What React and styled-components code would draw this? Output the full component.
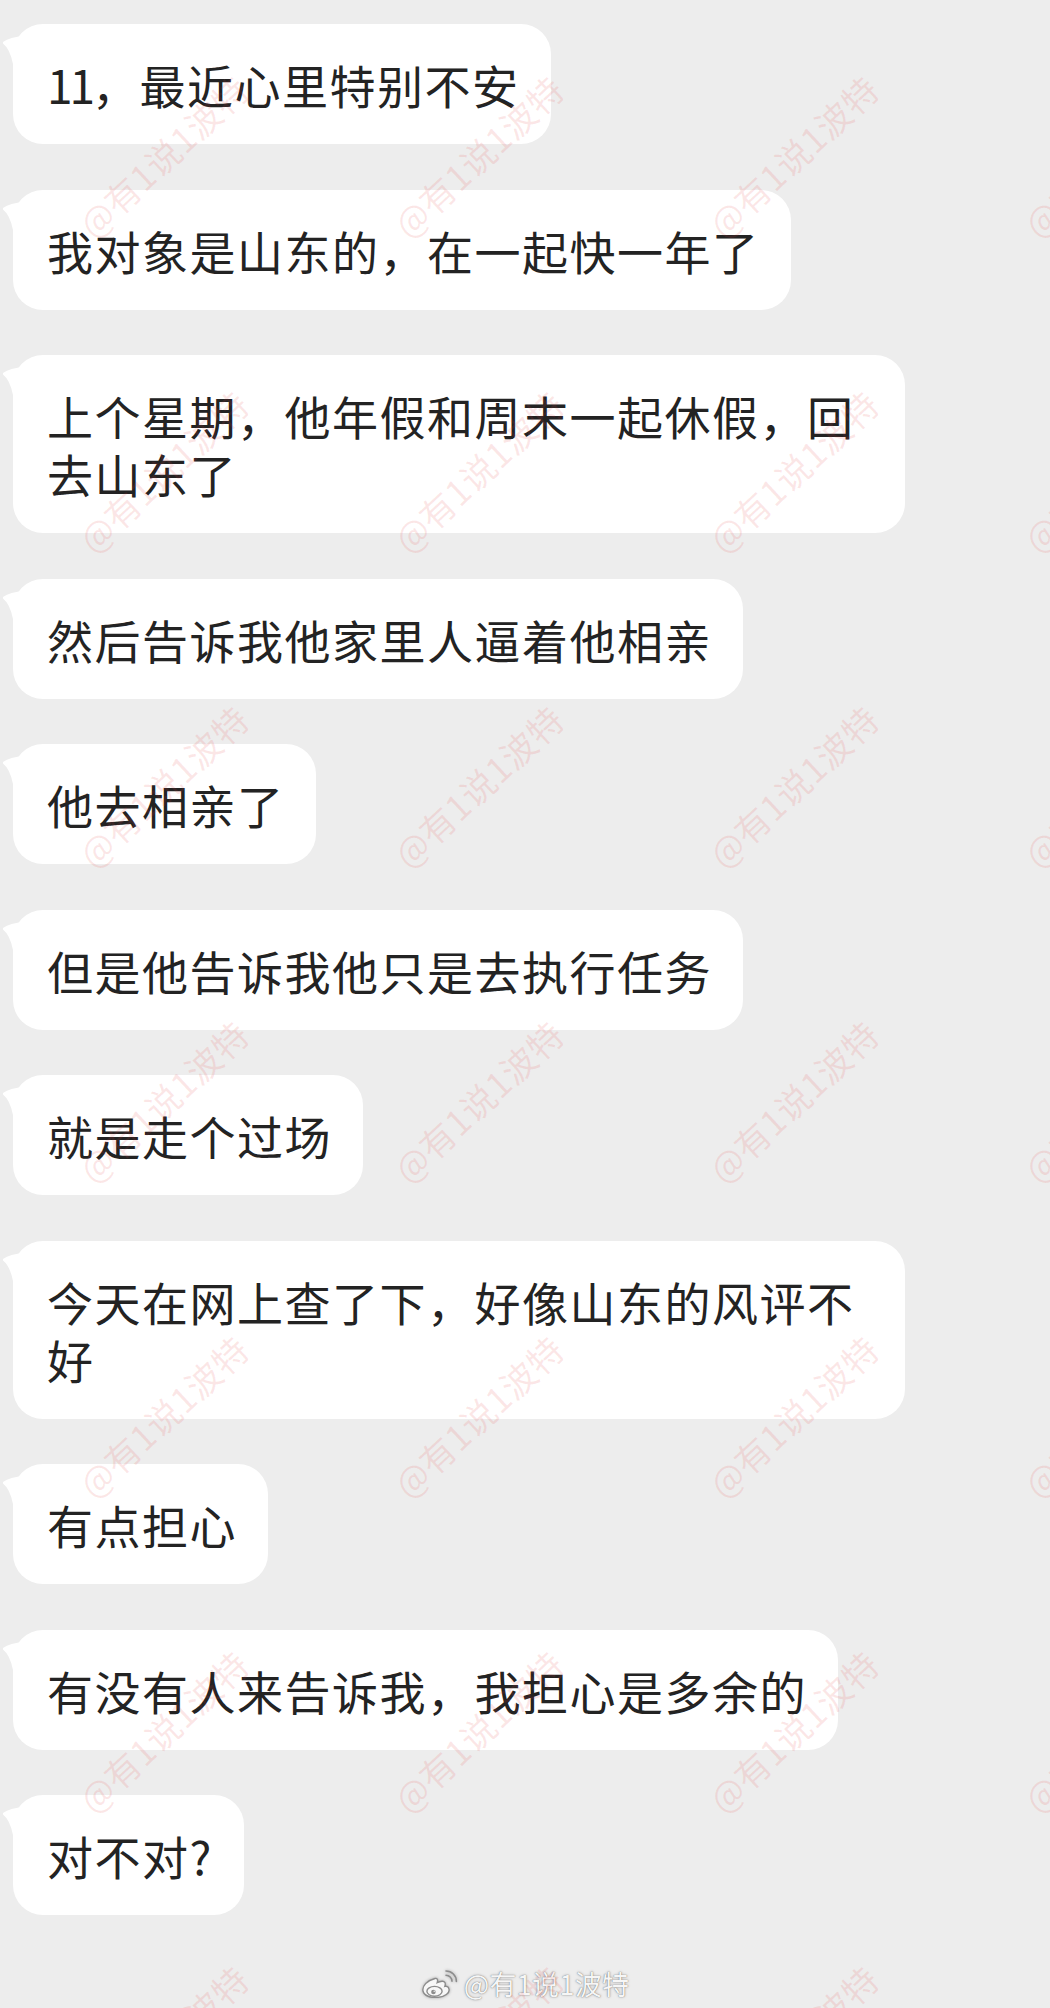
import React from 'react';
import styled, { createGlobalStyle } from 'styled-components';

const GlobalStyle = createGlobalStyle`
  html, body {
    margin: 0;
    padding: 0;
    background: #ededed;
  }
  body {
    font-family: "Noto Sans CJK SC", "Noto Sans", sans-serif;
  }
`;

const Page = styled.main`
  position: relative;
  width: 1050px;
  height: 2008px;
  box-sizing: border-box;
  overflow: hidden;
  background: #ededed;
  display: flex;
  flex-direction: column;
  padding-top: 24px;
`;

const Thread = styled.section`
  display: flex;
  flex-direction: column;
  align-items: flex-start;
  gap: 45.5px;
  padding-left: 13px;
`;

const Bubble = styled.div`
  position: relative;
  box-sizing: border-box;
  max-width: 892px;
  padding: 31px 31px 31px 34px;
  background: #ffffff;
  border-radius: 30px;
  color: #232323;
  font-size: 46px;
  line-height: 58px;
  letter-spacing: 1.5px;
  line-break: anywhere;
`;

/* Latin digits sit tighter than the CJK run around them */
const Num = styled.span`
  letter-spacing: -3px;
`;

const Tail = styled.svg`
  position: absolute;
  left: -11px;
  top: 8px;
  width: 26px;
  height: 40px;
  display: block;
`;

const Watermarks = styled.div`
  position: absolute;
  left: 5px;
  top: -2px;
  display: grid;
  grid-template-columns: repeat(4, 315px);
  grid-auto-rows: 315px;
  pointer-events: none;
  z-index: 2;
`;

const Mark = styled.div`
  display: flex;
  align-items: center;
  justify-content: center;
  font-size: 35px;
  letter-spacing: 0.5px;
  white-space: nowrap;
  color: rgba(230, 60, 60, 0.12);
  transform: rotate(-43deg);
`;

const Footer = styled.footer`
  align-self: center;
  display: flex;
  align-items: center;
  gap: 6px;
  height: 34px;
  margin-top: 52px;
`;

const Handle = styled.span`
  font-size: 27px;
  line-height: 34px;
  letter-spacing: 0.3px;
  color: #f6f6f6;
  text-shadow: 0 0 1px rgba(0, 0, 0, 0.55), 0 0 3px rgba(0, 0, 0, 0.25);
`;

const Logo = styled.svg`
  width: 37px;
  height: 28px;
  display: block;
  filter: drop-shadow(0 0 1.5px rgba(0, 0, 0, 0.3));
`;

const messages = [
  <>
    <Num>11</Num>，最近心里特别不安
  </>,
  '我对象是山东的，在一起快一年了',
  '上个星期，他年假和周末一起休假，回去山东了',
  '然后告诉我他家里人逼着他相亲',
  '他去相亲了',
  '但是他告诉我他只是去执行任务',
  '就是走个过场',
  '今天在网上查了下，好像山东的风评不好',
  '有点担心',
  '有没有人来告诉我，我担心是多余的',
  '对不对?',
];

const BubbleTail = () => (
  <Tail viewBox="0 0 26 40" aria-hidden="true">
    <path d="M1 10 Q 8 5 22 4 L 26 4 L 26 40 L 11 40 L 11 32 Q 8 17 1 11.5 Z" fill="#ffffff" />
  </Tail>
);

const WeiboLogo = () => (
  <Logo viewBox="0 0 37 28" aria-hidden="true">
    <path
      d="M14 8.5 C 6 10.5, 1 16, 2 21 C 3 26, 10 27.8, 16 27.4 C 24 27, 29 23, 28 19 C 27.5 16.5, 25.5 16, 23.8 16.4 C 25 13.2, 23.8 11, 21 11.2 C 19 11.3, 17.4 12, 16.2 12.6 C 17.2 9.6, 16.2 8, 14 8.5 Z"
      fill="#f7f7f7"
      stroke="#8c8c8c"
      strokeWidth="1.4"
    />
    <ellipse cx="13.5" cy="21.3" rx="7.6" ry="4.9" fill="#f7f7f7" stroke="#8c8c8c" strokeWidth="1.4" />
    <circle cx="12.4" cy="22" r="2.3" fill="#8c8c8c" />
    <circle cx="13.2" cy="21.2" r="0.7" fill="#f7f7f7" />
    <path d="M25 5.2 A 6 6 0 0 1 31 11.2" fill="none" stroke="#8c8c8c" strokeWidth="1.6" strokeLinecap="round" />
    <path d="M25 1 A 10.4 10.4 0 0 1 35.4 11.4" fill="none" stroke="#8c8c8c" strokeWidth="1.6" strokeLinecap="round" />
  </Logo>
);

export default function App() {
  const marks = Array.from({ length: 28 }, (_, i) => i);
  return (
    <>
      <GlobalStyle />
      <Page>
        <Thread>
          {messages.map((text, i) => (
            <Bubble key={i}>
              <BubbleTail />
              {text}
            </Bubble>
          ))}
        </Thread>
        <Footer>
          <WeiboLogo />
          <Handle>@有1说1波特</Handle>
        </Footer>
        <Watermarks aria-hidden="true">
          {marks.map((i) => (
            <Mark key={i}>@有1说1波特</Mark>
          ))}
        </Watermarks>
      </Page>
    </>
  );
}
